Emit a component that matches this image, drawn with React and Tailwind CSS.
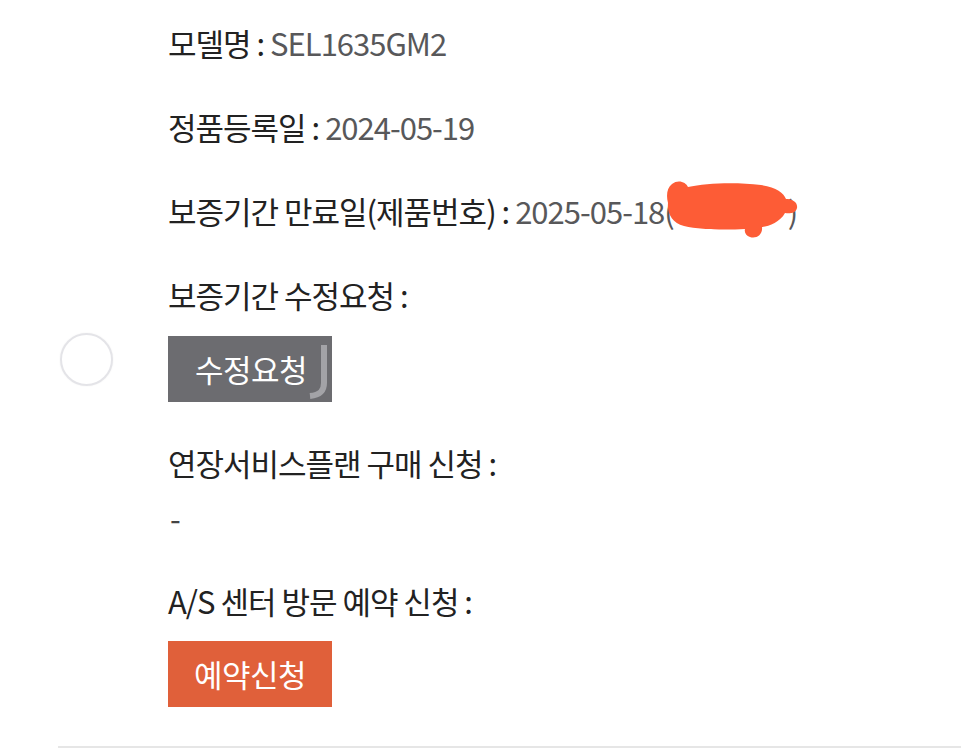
import React from "react";

function Row({ label, children }) {
  return (
    <div className="h-[40px] flex items-center whitespace-nowrap">
      <span className="text-[#222222]">{label}</span>
      <span className="text-[#222222]">&nbsp;:&nbsp;</span>
      {children}
    </div>
  );
}

export default function App() {
  return (
    <div
      className="relative w-[961px] h-[750px] bg-white overflow-hidden"
      style={{ fontFamily: '"Noto Sans CJK KR", "Noto Sans", sans-serif' }}
    >
      <div className="pl-[168px] pt-[23px] text-[31px] tracking-[-1px] leading-[40px]">
        <Row label="모델명">
          <span className="text-[#58585a]">SEL1635GM2</span>
        </Row>
        <div className="mt-[44px]">
          <Row label="정품등록일">
            <span className="text-[#58585a]">2024-05-19</span>
          </Row>
        </div>
        <div className="mt-[44px]">
          <Row label="보증기간 만료일(제품번호)">
            <span className="text-[#58585a]">
              2025-05-18(
              <span className="relative inline-block w-[114px] h-[10px]">
                <svg
                  className="absolute left-[-8px] top-[-34px]"
                  width="134"
                  height="60"
                  viewBox="0 0 134 60"
                >
                  <path
                    d="M6 4 C12 -1 20 2 22 7 C40 3 70 2 95 5 C110 7 118 13 120 19 C126 19 132 22 131 28 C130 33 124 34 119 33 C114 42 104 46 96 47 C97 55 90 59 84 57 C80 56 78 52 79 49 C60 50 35 50 18 46 C6 43 1 33 2 23 C0 15 1 8 6 4 Z"
                    fill="#fd5c36"
                  />
                </svg>
              </span>
              )
            </span>
          </Row>
        </div>
        <div className="mt-[44px] h-[40px] flex items-center text-[#222222]">
          보증기간 수정요청&nbsp;:
        </div>
        <div className="mt-[21px] w-[164px] h-[66px] bg-[#6c6c70] flex items-center pl-[27px] text-white text-[31px] tracking-[-0.5px] overflow-hidden whitespace-nowrap">
          <span className="shrink-0">수정요청</span>
          <svg className="shrink-0 ml-[-3px]" width="26" height="66" viewBox="0 0 26 66">
            <path d="M20 9 L20 47 C20 55 16 59 6 60" stroke="#a3a3a7" strokeWidth="6" fill="none" />
          </svg>
        </div>
        <div className="mt-[41px] h-[40px] flex items-center text-[#222222]">
          연장서비스플랜 구매 신청&nbsp;:
        </div>
        <div className="mt-[15px] h-[40px] flex items-center text-[#444444] pl-[2px]">-</div>
        <div className="mt-[43px] h-[40px] flex items-center text-[#222222]">
          A/S 센터 방문 예약 신청&nbsp;:
        </div>
        <div className="mt-[20px] w-[164px] h-[66px] bg-[#e0603a] flex items-center justify-center text-white text-[31px] tracking-[-0.5px]">
          예약신청
        </div>
      </div>
      <div className="absolute left-[58px] right-0 top-[746px] h-[2px] bg-[#e6e6e6]"></div>
      <div className="absolute left-[60px] top-[333px] w-[53px] h-[53px] rounded-full border-2 border-[#e4e4e8] bg-white shadow-[0_0_2px_rgba(0,0,0,0.06)]"></div>
    </div>
  );
}
